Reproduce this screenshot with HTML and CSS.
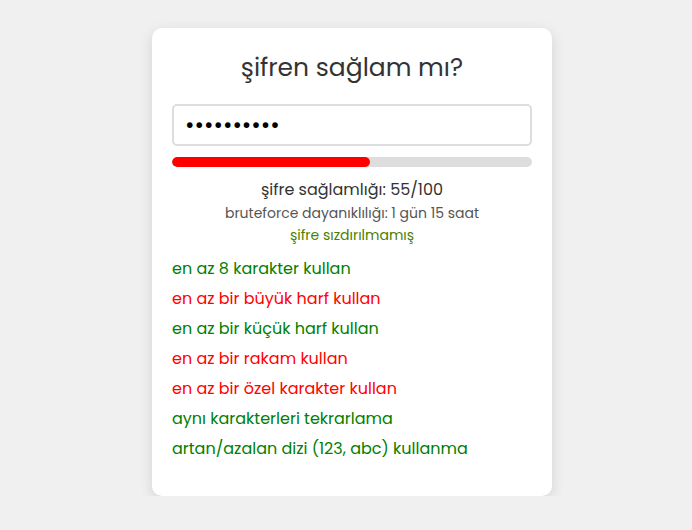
FILE: index.html
```html
<!DOCTYPE html>
<html lang="tr">
<head>
<meta charset="utf-8">
<link rel="stylesheet" href="styles.css">
</head>
<body>
<div class="wrap">
  <div class="card">
    <h2 class="title">şifren sağlam mı?</h2>
    <input class="pw" type="password" value="aaaaaaaaaa">
    <div class="bar"><div class="fill" style="width:55%"></div></div>
    <div class="score">şifre sağlamlığı: 55/100</div>
    <div class="brute">bruteforce dayanıklılığı: 1 gün 15 saat</div>
    <div class="leak">şifre sızdırılmamış</div>
    <ul class="rules">
      <li class="ok">en az 8 karakter kullan</li>
      <li class="bad">en az bir büyük harf kullan</li>
      <li class="ok">en az bir küçük harf kullan</li>
      <li class="bad">en az bir rakam kullan</li>
      <li class="bad">en az bir özel karakter kullan</li>
      <li class="ok">aynı karakterleri tekrarlama</li>
      <li class="ok">artan/azalan dizi (123, abc) kullanma</li>
    </ul>
  </div>
</div>
</body>
</html>
```
FILE: styles.css
```css
html, body {
  margin: 0;
  padding: 0;
  background: #f0f0f0;
  font-family: "Poppins", "Open Sans", sans-serif;
  color: #333;
}
.wrap {
  display: flex;
  justify-content: center;
  padding: 28px 0 0 12px;
}
.card {
  width: 400px;
  box-sizing: border-box;
  background: #fff;
  border-radius: 10px;
  box-shadow: 0 4px 14px rgba(0,0,0,0.12);
  padding: 22px 20px 32px;
  display: flex;
  flex-direction: column;
}
.title {
  margin: 0 0 18px;
  font-size: 25px;
  line-height: 36px;
  font-weight: 400;
  text-align: center;
  color: #333;
}
.pw {
  box-sizing: border-box;
  width: 360px;
  height: 42px;
  margin: 0;
  padding: 0 11px;
  border: 2px solid #ddd;
  border-radius: 5px;
  font-size: 23px;
  font-family: "Poppins", sans-serif;
  color: #000;
  outline: none;
}
.bar {
  margin-top: 11px;
  height: 10px;
  border-radius: 5px;
  background: #ddd;
  overflow: hidden;
}
.fill {
  height: 100%;
  background: #ff0000;
  border-radius: 5px;
}
.score {
  margin-top: 12px;
  font-size: 16px;
  line-height: 22px;
  text-align: center;
  color: #333;
}
.brute {
  margin-top: 2px;
  font-size: 14px;
  line-height: 20px;
  text-align: center;
  color: #555;
}
.leak {
  margin-top: 2px;
  font-size: 14px;
  line-height: 20px;
  text-align: center;
  color: #4a7f00;
}
.rules {
  list-style: none;
  margin: 9px 0 0;
  padding: 0;
}
.rules li {
  font-size: 16px;
  line-height: 30px;
}
.ok { color: #008000; }
.bad { color: #ff0000; }
```
